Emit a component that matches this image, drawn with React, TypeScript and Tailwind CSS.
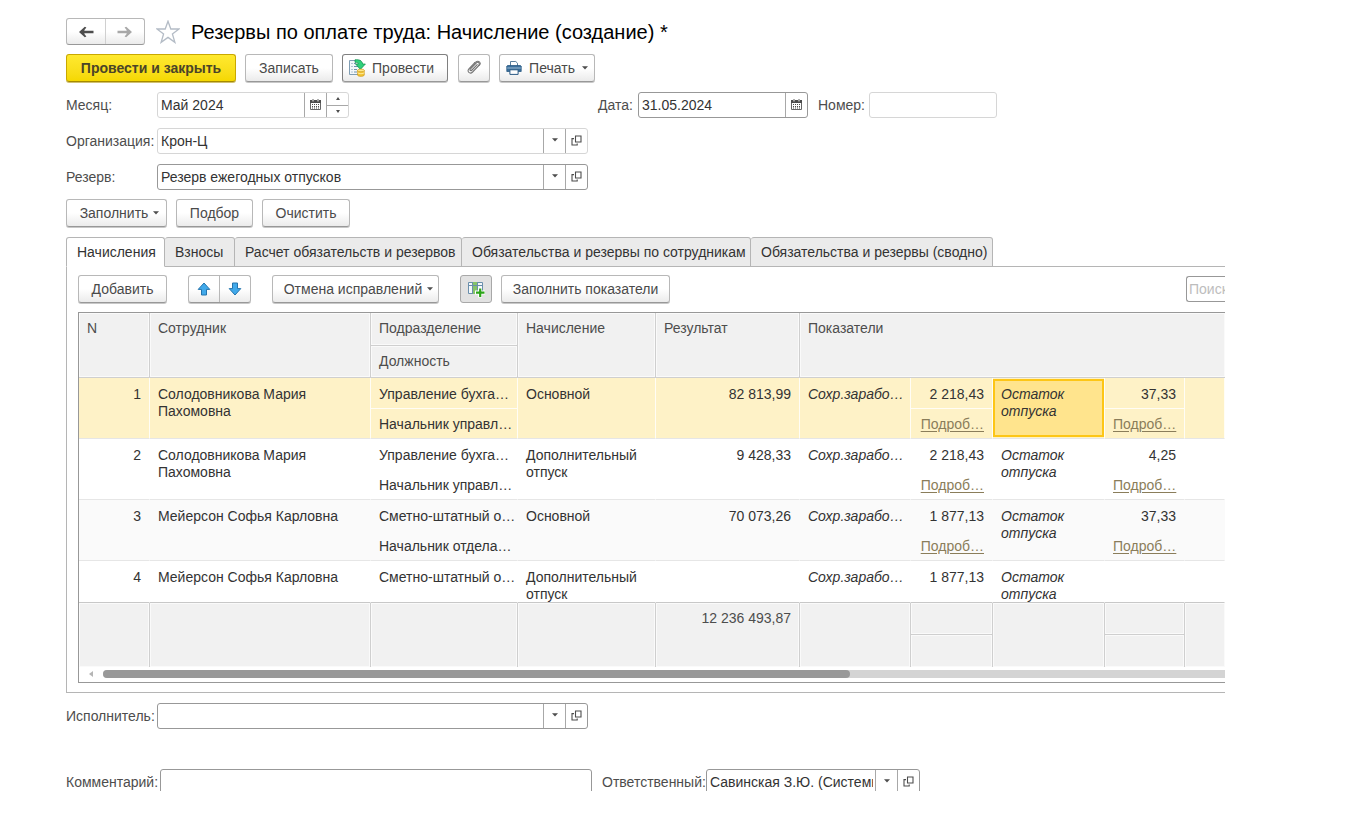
import React from "react";
import clsx from "clsx";

function ArrowIcon({ right = false, className }: { right?: boolean; className: string }) {
  return (
    <svg width="16" height="12" viewBox="0 0 16 12" className={className}>
      <path
        d={
          right
            ? "M.5 4.8H9.6V4L7.6 1.6L9.2 .8L15 6L9.2 11.2L7.6 10.4L9.6 8V7.2H.5Z"
            : "M15.5 4.8H6.4V4L8.4 1.6L6.8 .8L1 6L6.8 11.2L8.4 10.4L6.4 8V7.2H15.5Z"
        }
        fill="currentColor"
      />
    </svg>
  );
}

function StarIcon() {
  return (
    <svg width="24" height="24" viewBox="0 0 24 24" fill="none" stroke="#b4bcc6" strokeWidth="1.3">
      <path d="M12 1.2L14.8 9H23L16.4 13.9L18.9 22.4L12 17.4L5.1 22.4L7.6 13.9L1 9H9.2Z" />
    </svg>
  );
}

function PostIcon() {
  return (
    <svg width="18" height="18" viewBox="0 0 18 18">
      <path d="M1.5 1.5H12.5V15.5H1.5Z" fill="#f3f7fa" stroke="#7f9db3" />
      <path d="M3.5 4.5h1M3.5 7.5h1M3.5 10.5h1M3.5 13h1M6 4.5h2M6 7.5h4M6 10.5h3M6 13h3" stroke="#6f93ac" />
      <path d="M7 .8C11.5 .2 14.4 2 14.6 5H17.4L12.4 10.4L7.6 5H10.4C10.2 3.8 9 3.2 7 3.4Z" fill="#2fd07c" stroke="#0d8c48" strokeWidth=".7" />
      <path d="M9.5 11.4V16.2C10.3 17.8 15.4 17.8 16.3 16.2V11.4Z" fill="#f2c433" stroke="#c8931a" strokeWidth=".6" />
      <ellipse cx="12.9" cy="11.4" rx="3.4" ry="1.3" fill="#ffe98a" stroke="#c8931a" strokeWidth=".6" />
      <path d="M9.6 13.8C10.6 15 15.3 15 16.2 13.8" fill="none" stroke="#fff3b8" strokeWidth=".8" />
    </svg>
  );
}

function ClipIcon() {
  return (
    <svg width="16" height="16" viewBox="0 0 16 16" fill="none" stroke="#757575" strokeWidth="1.1" strokeLinecap="round">
      <path d="M11.2 4.6L6 10C4.6 11.4 3.2 10.2 4.5 8.8L10.2 3C12 1.2 14.6 3.6 12.8 5.5L6.6 12C4 14.6 .4 11.6 2.9 8.8L8.8 2.6" />
      <path d="M12.8 5.5L14 4.3C15 3 13 .6 10.8 1.4L8.8 2.6" />
    </svg>
  );
}

function PrinterIcon() {
  return (
    <svg width="16" height="16" viewBox="0 0 16 16">
      <path d="M4.5 6V1.5H9.8L11.5 3.2V6" fill="#fff" stroke="#5b7f9d" />
      <path d="M1.5 5.5H14.5L15.2 6.3V11.5H.8V6.3Z" fill="#3a6f9c" stroke="#2b5a84" strokeWidth=".8" />
      <path d="M1.2 8H14.8" stroke="#a9c4da" strokeWidth=".9" />
      <path d="M3.9 9.8H12.1V14.4H3.9Z" fill="#fff" stroke="#2b5a84" />
    </svg>
  );
}

function CalendarIcon() {
  return (
    <svg width="11" height="11" viewBox="0 0 11 11">
      <path d="M.5 1.5H10.5V10.5H.5Z" fill="#fff" stroke="#666" />
      <path d="M0 1H11V4H0Z" fill="#4d4d4d" />
      <path d="M3 0V2.2M8 0V2.2" stroke="#fff" strokeWidth="1.8" />
      <path d="M3 0V2M8 0V2" stroke="#4d4d4d" strokeWidth=".9" />
      <path d="M2 5.5H9M2 7.5H9M2 9H9" stroke="#4d4d4d" strokeWidth="1" strokeDasharray="1 1" />
    </svg>
  );
}

function OpenIcon() {
  return (
    <svg width="11" height="11" viewBox="0 0 11 11" fill="none" stroke="#4d4d4d" strokeWidth="1.1">
      <path d="M4.5 1H10V7H4.5Z" />
      <path d="M3 3.6H1V10H6.2V8.4" />
    </svg>
  );
}

function Caret() {
  return (
    <svg width="6" height="4" viewBox="0 0 6 4" className="shrink-0">
      <path d="M0 .3H6L3 3.6Z" fill="#4d4d4d" />
    </svg>
  );
}

function MoveIcon({ down = false }: { down?: boolean }) {
  return (
    <svg width="14" height="14" viewBox="0 0 14 14">
      <path
        d={down ? "M4.5 1H9.5V6.6H12.8L7 13L1.2 6.6H4.5Z" : "M4.5 13H9.5V7.4H12.8L7 1L1.2 7.4H4.5Z"}
        fill="#41a9ea"
        stroke="#2474ad"
      />
    </svg>
  );
}

function ColumnsIcon() {
  return (
    <svg width="18" height="17" viewBox="0 0 18 17">
      <path d="M1.5 1.5H15.5V12.5H1.5Z" fill="#f4f8fb" stroke="#6a8fac" />
      <path d="M6 1H10.5V13H6Z" fill="#86c46a" />
      <path d="M1 4.5H16M5.5 1V13M10.5 1V13" stroke="#6a8fac" />
      <path d="M13 6.5V16.5M8 11.5H18" stroke="#fff" strokeWidth="4" />
      <path d="M13.2 7.5V16M9 11.7H17.5" stroke="#2ea51a" strokeWidth="2.2" />
    </svg>
  );
}

const buttonBase =
  "flex h-[28px] shrink-0 items-center justify-center rounded-[3px] border border-b-[#989898] bg-linear-to-b from-white from-50% to-[#ebebeb] shadow-[0_1px_0_#c8c8c8] whitespace-nowrap text-[#4a4a4a]";

function Button({
  children,
  className,
  label,
}: {
  children: React.ReactNode;
  className?: string;
  label?: string;
}) {
  return (
    <button type="button" aria-label={label} className={clsx(buttonBase, className ?? "border-[#b8b8b8]")}>
      {children}
    </button>
  );
}

type FieldProps = {
  id: string;
  value?: string;
  width: string;
  soft?: boolean;
  children?: React.ReactNode;
};

function Field({ id, value = "", width, soft = false, children }: FieldProps) {
  return (
    <div
      className={clsx(
        "flex h-[26px] shrink-0 overflow-hidden rounded-[3px] border bg-white",
        soft ? "border-[#d6d6d6]" : "border-[#989898]",
        width,
      )}
    >
      <input id={id} defaultValue={value} className="min-w-0 flex-1 bg-transparent pr-[2px] pl-[3px] text-[#333] outline-none" />
      {children}
    </div>
  );
}

function FieldButton({ label, children }: { label: string; children: React.ReactNode }) {
  return (
    <button type="button" aria-label={label} className="flex w-[22px] shrink-0 items-center justify-center border-l border-[#a8a8a8] pb-[2px]">
      {children}
    </button>
  );
}

function PickButtons() {
  return (
    <>
      <FieldButton label="Выбрать">
        <Caret />
      </FieldButton>
      <FieldButton label="Открыть">
        <OpenIcon />
      </FieldButton>
    </>
  );
}

const rowLabel = "w-[91px] shrink-0 whitespace-nowrap";

const tabs: [string, string][] = [
  ["Начисления", "w-[99px]"],
  ["Взносы", "w-[70px]"],
  ["Расчет обязательств и резервов", "w-[227px]"],
  ["Обязательства и резервы по сотрудникам", "w-[289px]"],
  ["Обязательства и резервы (сводно)", "w-[242px]"],
];

type Row = {
  n: number;
  name: string;
  department: string;
  position: string;
  accrual: string;
  result: string;
  first: string;
  second: string;
};

const rows: Row[] = [
  { n: 1, name: "Солодовникова Мария Пахомовна", department: "Управление бухга…", position: "Начальник управл…", accrual: "Основной", result: "82 813,99", first: "2 218,43", second: "37,33" },
  { n: 2, name: "Солодовникова Мария Пахомовна", department: "Управление бухга…", position: "Начальник управл…", accrual: "Дополнительный отпуск", result: "9 428,33", first: "2 218,43", second: "4,25" },
  { n: 3, name: "Мейерсон Софья Карловна", department: "Сметно-штатный о…", position: "Начальник отдела…", accrual: "Основной", result: "70 073,26", first: "1 877,13", second: "37,33" },
  { n: 4, name: "Мейерсон Софья Карловна", department: "Сметно-штатный о…", position: "", accrual: "Дополнительный отпуск", result: "", first: "1 877,13", second: "" },
];

function Split({ top, bottom, selected, right }: { top: string; bottom: React.ReactNode; selected: boolean; right?: boolean }) {
  return (
    <div className={clsx("whitespace-nowrap", right && "text-right")}>
      <div className={clsx("h-[31px] border-b px-[8px] pt-[8px]", selected ? "border-[#fffdf5]" : "border-transparent")}>{top}</div>
      <div className="px-[8px] pt-[7px]">{bottom}</div>
    </div>
  );
}

function DataRow({ row }: { row: Row }) {
  const selected = row.n === 1;
  const last = row.n === rows.length;
  const cell = clsx(
    "border-r border-b p-0 align-top",
    selected ? "border-r-[#fffdf5] bg-[#fef2c7]" : "border-r-transparent",
    last ? "border-b-[#c8c8c8]" : "border-b-[#e6e6e6]",
  );
  const box = clsx("overflow-hidden", last ? "h-[41px]" : "h-[60px]");
  const text = clsx(box, "px-[8px] pt-[8px]");
  const link = (
    <a href="#details" className="text-[#8a7d5a] underline underline-offset-2">
      Подроб…
    </a>
  );
  return (
    <tr className={row.n === 3 ? "bg-[#fafafa]" : "bg-white"}>
      <td className={cell}><div className={clsx(text, "text-right")}>{row.n}</div></td>
      <td className={cell}><div className={text}>{row.name}</div></td>
      <td className={cell}>
        <div className={box}><Split top={row.department} bottom={row.position} selected={selected} /></div>
      </td>
      <td className={cell}><div className={text}>{row.accrual}</div></td>
      <td className={cell}><div className={clsx(text, "text-right")}>{row.result}</div></td>
      <td className={cell}><div className={clsx(text, "italic whitespace-nowrap")}>Сохр.зарабо…</div></td>
      <td className={cell}>
        <div className={box}><Split top={row.first} bottom={last ? "" : link} selected={selected} right /></div>
      </td>
      <td className={cell}>
        {selected ? (
          <div className="my-px h-[58px] border-2 border-[#fdc616] bg-[#ffe48d] px-[6px] pt-[5px] italic">Остаток отпуска</div>
        ) : (
          <div className={clsx(text, "italic")}>Остаток отпуска</div>
        )}
      </td>
      <td className={cell}>
        <div className={box}><Split top={row.second} bottom={last ? "" : link} selected={selected} right /></div>
      </td>
      <td className={cell} />
    </tr>
  );
}

const headCell = "border-r border-b border-[#cfcfcf] px-[8px] pt-[7px] text-left align-top font-normal shadow-[inset_0_0_0_1px_#fafafa]";
const footCell = "border-r border-[#cfcfcf] px-[8px] pt-[7px] text-right align-top shadow-[inset_0_0_0_1px_#fafafa]";

function AccrualTable() {
  return (
    <div className="border border-r-0 border-[#989898]">
      <table className="w-full table-fixed border-separate border-spacing-0 leading-[17px]">
        <colgroup>
          <col className="w-[71px]" />
          <col className="w-[221px]" />
          <col className="w-[147px]" />
          <col className="w-[138px]" />
          <col className="w-[144px]" />
          <col className="w-[111px]" />
          <col className="w-[82px]" />
          <col className="w-[112px]" />
          <col className="w-[80px]" />
          <col />
        </colgroup>
        <thead className="bg-[#f1f1f1] text-[#4d4d4d]">
          <tr className="h-[33px]">
            <th rowSpan={2} className={headCell}>N</th>
            <th rowSpan={2} className={headCell}>Сотрудник</th>
            <th className={headCell}>Подразделение</th>
            <th rowSpan={2} className={headCell}>Начисление</th>
            <th rowSpan={2} className={headCell}>Результат</th>
            <th rowSpan={2} colSpan={5} className={clsx(headCell, "border-r-0")}>Показатели</th>
          </tr>
          <tr className="h-[32px]">
            <th className={headCell}>Должность</th>
          </tr>
        </thead>
        <tbody className="text-[#333]">
          {rows.map((row) => (
            <DataRow key={row.n} row={row} />
          ))}
        </tbody>
        <tfoot className="bg-[#f1f1f1] text-[#4d4d4d]">
          <tr className="h-[32px]">
            <td rowSpan={2} className={footCell} />
            <td rowSpan={2} className={footCell} />
            <td rowSpan={2} className={footCell} />
            <td rowSpan={2} className={footCell} />
            <td rowSpan={2} className={footCell}>12 236 493,87</td>
            <td rowSpan={2} className={footCell} />
            <td className={clsx(footCell, "border-b")} />
            <td rowSpan={2} className={footCell} />
            <td className={clsx(footCell, "border-b")} />
            <td rowSpan={2} className={clsx(footCell, "border-r-0")} />
          </tr>
          <tr className="h-[32px]">
            <td className={footCell} />
            <td className={footCell} />
          </tr>
        </tfoot>
      </table>
      <div className="flex h-[15px] items-start pt-[3px] pl-[10px]">
        <svg width="4" height="8" viewBox="0 0 4 8">
          <path d="M4 1V7L0 4Z" fill="#b5b5b5" />
        </svg>
        <div className="ml-[10px] h-[8px] flex-1 rounded-l-full bg-[#d4d4d4]">
          <div className="h-full w-[66.6%] rounded-full bg-[#999]" />
        </div>
      </div>
    </div>
  );
}

export default function App() {
  return (
    <main className="bg-white pt-[18px] pr-[126px] pl-[66px] font-['Liberation_Sans',Arial,sans-serif] text-[14px] leading-[17px] text-[#4d4d4d]">
      <header className="flex h-[27px] items-center">
        <div className="flex h-[27px] w-[79px] rounded-[3px] border border-[#b8b8b8] border-b-[#989898] bg-linear-to-b from-white from-50% to-[#ebebeb]">
          <button type="button" aria-label="Назад" className="flex flex-1 items-center justify-center border-r border-[#d0d0d0]">
            <ArrowIcon className="text-[#4d4d4d]" />
          </button>
          <button type="button" aria-label="Вперед" className="flex flex-1 items-center justify-center">
            <ArrowIcon right className="text-[#a8a8a8]" />
          </button>
        </div>
        <button type="button" aria-label="В избранное" className="ml-[11px]">
          <StarIcon />
        </button>
        <h1 className="ml-[11px] text-[20px] leading-[24px] whitespace-nowrap text-black">
          Резервы по оплате труда: Начисление (создание) *
        </h1>
      </header>

      <div className="mt-[9px] flex">
        <button type="button" className="h-[28px] w-[170px] rounded-[3px] border border-[#c9a800] border-b-[#a58a00] bg-linear-to-b from-[#ffe92e] to-[#f5d800] font-bold whitespace-nowrap text-[#4a4428] shadow-[0_1px_0_#d0c070]">
          Провести и закрыть
        </button>
        <Button className="ml-[9px] w-[88px] border-[#b8b8b8]">Записать</Button>
        <Button className="ml-[9px] w-[106px] gap-[6px] border-[#808080] pr-[8px]">
          <PostIcon />
          Провести
        </Button>
        <Button label="Присоединенные файлы" className="ml-[10px] w-[32px] border-[#b8b8b8]"><ClipIcon /></Button>
        <Button className="ml-[9px] w-[96px] gap-[7px] border-[#b8b8b8]">
          <PrinterIcon />
          Печать
          <Caret />
        </Button>
      </div>

      <div className="mt-[10px] flex items-center">
        <label htmlFor="month" className={rowLabel}>Месяц:</label>
        <Field id="month" value="Май 2024" width="w-[192px]" soft>
          <FieldButton label="Календарь"><CalendarIcon /></FieldButton>
          <div className="flex w-[22px] flex-col border-l border-[#a8a8a8]">
            <button type="button" aria-label="Следующий месяц" className="flex flex-1 items-center justify-center border-b border-[#a8a8a8]">
              <svg width="4" height="3" viewBox="0 0 4 3"><path d="M2 0L4 3H0Z" fill="#4d4d4d" /></svg>
            </button>
            <button type="button" aria-label="Предыдущий месяц" className="flex flex-1 items-center justify-center">
              <svg width="4" height="3" viewBox="0 0 4 3"><path d="M2 3L4 0H0Z" fill="#4d4d4d" /></svg>
            </button>
          </div>
        </Field>
        <label htmlFor="date" className="ml-[249px] w-[40px] shrink-0">Дата:</label>
        <Field id="date" value="31.05.2024" width="w-[170px]">
          <FieldButton label="Календарь"><CalendarIcon /></FieldButton>
        </Field>
        <label htmlFor="number" className="ml-[10px] w-[51px] shrink-0">Номер:</label>
        <Field id="number" width="w-[128px]" soft />
      </div>

      <div className="mt-[10px] flex items-center">
        <label htmlFor="organization" className={rowLabel}>Организация:</label>
        <Field id="organization" value="Крон-Ц" width="w-[431px]" soft><PickButtons /></Field>
      </div>

      <div className="mt-[10px] flex items-center">
        <label htmlFor="reserve" className={rowLabel}>Резерв:</label>
        <Field id="reserve" value="Резерв ежегодных отпусков" width="w-[431px]"><PickButtons /></Field>
      </div>

      <div className="mt-[9px] flex gap-[9px]">
        <Button className="w-[101px] gap-[5px] border-[#b8b8b8] pl-[6px]">Заполнить<Caret /></Button>
        <Button className="w-[77px] border-[#b8b8b8]">Подбор</Button>
        <Button className="w-[88px] border-[#b8b8b8]">Очистить</Button>
      </div>

      <div role="tablist" className="relative z-10 mt-[10px] flex">
        {tabs.map(([name, width], index) => (
          <button
            key={name}
            type="button"
            role="tab"
            aria-selected={index === 0}
            className={clsx(
              "h-[30px] shrink-0 rounded-t-[3px] border border-l-0 border-[#b5b5b5] pl-[10px] text-left whitespace-nowrap text-[#333] first:border-l",
              width,
              index === 0 ? "border-b-white bg-white" : "bg-[#ebebeb]",
            )}
          >
            {name}
          </button>
        ))}
      </div>

      <section className="-mt-px overflow-hidden border border-r-0 border-[#b5b5b5] pt-[8px] pb-[9px] pl-[11px]">
        <div className="mb-[9px] flex">
          <Button className="w-[89px] border-[#b8b8b8]">Добавить</Button>
          <div className="ml-[21px] flex h-[28px] w-[63px] rounded-[3px] border border-[#b8b8b8] border-b-[#989898] bg-linear-to-b from-white from-50% to-[#ebebeb] shadow-[0_1px_0_#c8c8c8]">
            <button type="button" aria-label="Переместить вверх" className="flex flex-1 items-center justify-center border-r border-[#b8b8b8]"><MoveIcon /></button>
            <button type="button" aria-label="Переместить вниз" className="flex flex-1 items-center justify-center"><MoveIcon down /></button>
          </div>
          <Button className="ml-[21px] w-[167px] gap-[5px] border-[#b8b8b8] pl-[6px]">Отмена исправлений<Caret /></Button>
          <button type="button" aria-label="Показатели в колонках" className="ml-[21px] flex h-[28px] w-[32px] items-center justify-center rounded-[3px] border border-[#a8a8a8] bg-[#e2e2e2]">
            <ColumnsIcon />
          </button>
          <Button className="ml-[9px] w-[169px] border-[#b8b8b8]">Заполнить показатели</Button>
          <input
            aria-label="Поиск"
            placeholder="Поиск"
            className="ml-auto h-[26px] w-[39px] self-center rounded-l-[3px] border border-r-0 border-[#989898] pl-[2px] outline-none placeholder:text-[#bdbdbd]"
          />
        </div>
        <AccrualTable />
      </section>

      <div className="mt-[10px] flex items-center">
        <label htmlFor="performer" className={rowLabel}>Исполнитель:</label>
        <Field id="performer" width="w-[431px]"><PickButtons /></Field>
      </div>

      <div className="mt-[40px] flex h-[22px] items-start overflow-hidden">
        <label htmlFor="comment" className="w-[94px] shrink-0 pt-[5px]">Комментарий:</label>
        <Field id="comment" width="w-[432px]" />
        <label htmlFor="responsible" className="ml-[10px] w-[104px] shrink-0 pt-[5px]">Ответственный:</label>
        <Field id="responsible" value="Савинская З.Ю. (Системный)" width="w-[214px]"><PickButtons /></Field>
      </div>
    </main>
  );
}
